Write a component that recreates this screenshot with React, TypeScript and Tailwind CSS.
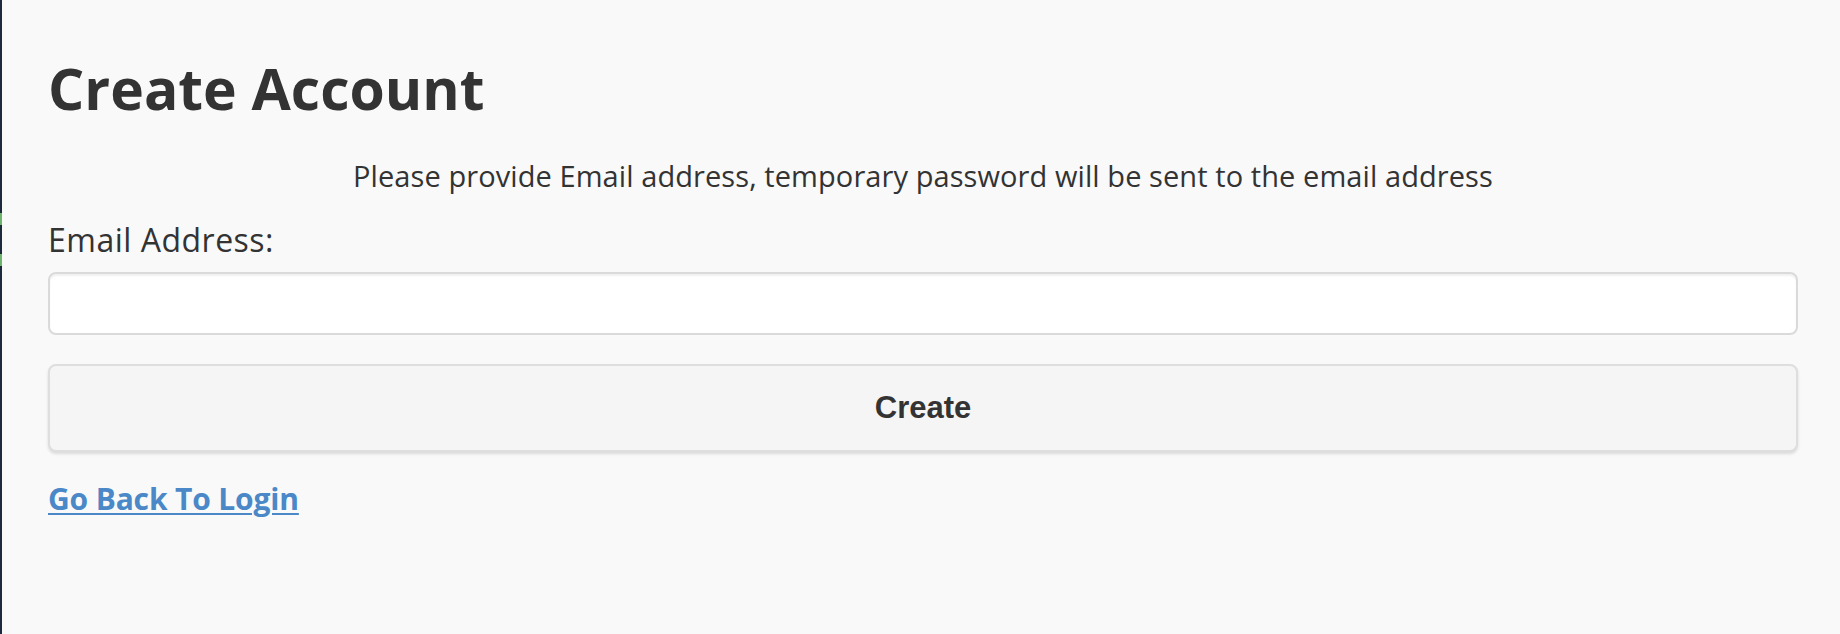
import React from 'react';

const lucida = { fontFamily: '"Open Sans", "DejaVu Sans", sans-serif' };

export default function App() {
  return (
    <div className="flex min-h-[634px] w-full bg-[#f9f9f9] text-[#333333]">
      {/* dark edge of the neighbouring pane */}
      <div className="relative w-[2px] shrink-0 bg-[#1c2b3b]">
        <span className="absolute left-0 top-[213px] h-[12px] w-[2px] bg-[#6db36d]" />
        <span className="absolute left-0 top-[254px] h-[12px] w-[2px] bg-[#6db36d]" />
      </div>

      <div className="flex-1 pl-[46px] pr-[42px] pt-[56px]" style={lucida}>
        <h1 className="text-[57px] font-bold leading-[64px]">Create Account</h1>

        <p className="mt-[40px] text-center text-[29px] leading-[32px] tracking-[0.08px]">
          Please provide Email address, temporary password will be sent to the email address
        </p>

        <form className="mt-[31px] flex flex-col" onSubmit={(e) => e.preventDefault()}>
          <label htmlFor="email" className="text-[32px] leading-[34px] tracking-[0.5px]">
            Email Address:
          </label>
          <input
            id="email"
            type="email"
            className="mt-[15px] h-[63px] w-full rounded-[8px] border-2 border-[#dadada] bg-white px-4 text-[28px] shadow-[inset_0_2px_2px_rgba(0,0,0,0.06)] outline-none"
          />
          <button
            type="submit"
            className="mt-[29px] h-[88px] w-full rounded-[8px] border-2 border-[#dedede] bg-[#f5f5f5] text-[31px] font-bold text-[#333333] shadow-[0_2px_3px_rgba(0,0,0,0.12)]"
            style={{ fontFamily: '"Liberation Sans", Arial, sans-serif' }}
          >
            Create
          </button>
        </form>

        <div className="mt-[31px]">
          <a
            href="#"
            className="text-[30px] font-bold leading-[32px] tracking-[-0.15px] text-[#4a88c8] underline decoration-2 underline-offset-[3px]"
          >
            Go Back To Login
          </a>
        </div>
      </div>
    </div>
  );
}
